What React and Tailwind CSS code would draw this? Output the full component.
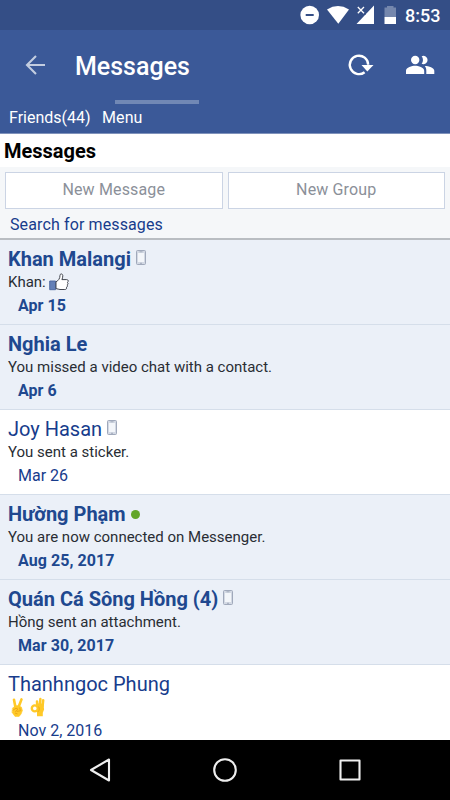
import clsx from "clsx";

const THREADS = [
  { name: "Khan Malangi", preview: "Khan:", date: "Apr 15", unread: true, mobile: true, like: true },
  { name: "Nghia Le", preview: "You missed a video chat with a contact.", date: "Apr 6", unread: true },
  { name: "Joy Hasan", preview: "You sent a sticker.", date: "Mar 26", mobile: true },
  { name: "Hường Phạm", preview: "You are now connected on Messenger.", date: "Aug 25, 2017", unread: true, online: true },
  { name: "Quán Cá Sông Hồng (4)", preview: "Hồng sent an attachment.", date: "Mar 30, 2017", unread: true, mobile: true },
  { name: "Thanhngoc Phung", date: "Nov 2, 2016", hands: true },
];

function StatusBar() {
  return (
    <div className="flex h-[30px] items-center bg-[#344e86] pl-[300px] text-white">
      <svg width="100" height="30" viewBox="0 0 100 30" fill="currentColor" className="shrink-0">
        <circle cx="9.7" cy="15" r="9.3" />
        <path d="M5.7 15h8" stroke="#344e86" strokeWidth="2" />
        <path d="M27 9.4Q38 2.6 49 9.4L38.3 23.8Z" />
        <path d="M74 5.5V24H56.5Z" />
        <path d="M56 5L66 15V5Z" fill="#344e86" />
        <path d="M57.8 7l6.2 6.2M64 7l-6.2 6.2" stroke="currentColor" strokeWidth="1.3" />
        <path d="M87 6h6.5v1.5H96V17H84.5V7.5H87Z" opacity=".32" />
        <path d="M84.5 17H96v7H84.5z" />
      </svg>
      <span className="ml-[5px] pt-px text-[18px] leading-[30px] font-medium">8:53</span>
    </div>
  );
}

function Header() {
  return (
    <header className="h-[104px] border-b border-[#7f92bb] bg-[#3b5998] text-white">
      <div className="flex h-[70px] items-center pl-[25px]">
        <svg width="21" height="20" viewBox="0 0 21 20" fill="none" stroke="#c3cde0" strokeWidth="2.1">
          <path d="M20 10H2M11 1L2 10l9 9" />
        </svg>
        <h1 className="ml-[29px] w-[243px] pt-[3px] text-[25px] leading-[32px] font-medium">Messages</h1>
        <svg width="28" height="24" viewBox="0 0 28 24" className="ml-[29px]">
          <path d="M17.6 19.2A9.2 9.2 0 1 1 21.2 11.8" fill="none" stroke="white" strokeWidth="2.4" />
          <path d="M14.5 12H26.5l-6.2 6.4Z" fill="white" />
        </svg>
        <svg width="30" height="20" viewBox="0 0 30 20" fill="white" className="ml-[30px]">
          <circle cx="10.2" cy="5" r="4.2" />
          <path d="M16.6 1.2a4.2 4.2 0 1 1 0 7.6c1.8-2 1.8-5.6 0-7.6ZM1 19v-3.3C1 12.3 7 10.7 10.1 10.7S19.2 12.3 19.2 15.7V19ZM19.8 11c4 .1 9.5 1.8 9.5 4.7V19h-8v-3.3c0-2-.5-3.5-1.5-4.7Z" />
        </svg>
      </div>
      <div className="ml-[115px] h-1 w-[84px] bg-[#7188b5]" />
      <nav className="flex gap-[11px] pl-[9px] text-[16px] leading-[27px]">
        <span className="w-[82px]">Friends(44)</span>
        <span className="tracking-[.1px]">Menu</span>
      </nav>
    </header>
  );
}

function PhoneIcon() {
  return (
    <svg width="11" height="16" viewBox="0 0 11 16" className="mb-[2px] ml-[5px] shrink-0">
      <rect x=".5" y=".5" width="9" height="14" rx="1" fill="#d3d9e4" stroke="#a0a9bb" />
      <path d="M2 3h6v9H2z" fill="#f3f6fa" />
      <path d="M3.5 1.8h3M4 13.3h2" stroke="#9099ac" strokeWidth=".7" />
    </svg>
  );
}

function LikeIcon() {
  return (
    <svg width="20" height="18" viewBox="0 0 20 18" className="ml-[3px]">
      <path d="M.7 8h5.8v8.7H.7z" fill="#6480b7" stroke="#49659d" strokeWidth=".9" />
      <path d="M7 8.8c2.6-1.3 3.9-3.2 4-6.4 0-2 2.7-2 2.8.3.1 1.4-.5 3-.9 3.9h4.8c1.9 0 2 2.2.7 2.8 1 .8.7 2.1-.3 2.5.7.8.3 2.1-.6 2.4.4 1.4-.3 2.2-1.7 2.2H11c-1.5 0-2.2-.8-4-.9Z" fill="white" stroke="#424650" />
    </svg>
  );
}

function Hands() {
  return (
    <svg width="38" height="20" viewBox="0 0 38 20" strokeLinecap="round" strokeLinejoin="round" className="ml-[3px]">
      <path d="M4.4 10L3 2.8M7.6 10l2.9-7.6" fill="none" stroke="#ffc928" strokeWidth="2.6" />
      <path d="M1.8 10.8l4-2.4 4.6 1.6 1 3.6-1.3 3.4-2 2.4H4L1.2 15.6Z" fill="#ffc928" stroke="#ffc928" strokeWidth=".6" />
      <path d="M2 13.2l3-2 2 1-2.4 2.2M8.8 11l.6 2.8-3.4.6M4.4 16.2l1.8.6" fill="none" stroke="#eba414" strokeWidth=".9" />
      <path d="M26.2 8l-.2-3.6M28.8 8l.6-6M31.6 9l.6-5.8" fill="none" stroke="#ffc928" strokeWidth="2.5" />
      <path d="M25.8 6.5h6.6l.7 5.9-1.3 3.4v3.4h-5.8v-3.4Z" fill="#ffc928" />
      <circle cx="23.8" cy="11.4" r="3" fill="white" stroke="#ffc928" strokeWidth="2.4" />
      <path d="M27.6 9.8c1.2 1.4 1.1 3.6-.6 5" fill="none" stroke="#edab0b" strokeWidth=".8" />
    </svg>
  );
}

function Thread({ thread }) {
  return (
    <li
      className={clsx(
        "h-[85px] border-b border-[#d5deea] pl-2",
        thread.unread ? "bg-[#ebf0f8] text-[#20488f]" : "bg-white text-[#173c8c]"
      )}
    >
      <div className={clsx("flex h-[32px] items-center pt-[6px] text-[20px] leading-[26px]", thread.unread ? "font-bold" : "font-normal")}>
        <span className="whitespace-nowrap">{thread.name}</span>
        {thread.mobile && <PhoneIcon />}
        {thread.online && <span className="ml-[5px] size-[9px] rounded-full bg-[#63a62b]" />}
      </div>
      <div className="flex h-5 items-center text-[15px] text-[#292d34]">
        {thread.preview && <span className="whitespace-nowrap">{thread.preview}</span>}
        {thread.like && <LikeIcon />}
        {thread.hands && <Hands />}
      </div>
      <div className={clsx("pt-[2px] pl-[10px] text-[16px] leading-6", thread.unread ? "font-bold tracking-[.06px]" : "font-normal")}>
        {thread.date}
      </div>
    </li>
  );
}

function NavigationBar() {
  return (
    <div className="flex h-[60px] items-center justify-center bg-black">
      <svg width="274" height="30" viewBox="0 0 274 30" fill="none" stroke="#eee" strokeWidth="2.1" strokeLinejoin="round">
        <path d="M21 4.5v21L3 15Z" />
        <circle cx="137" cy="15" r="10.8" />
        <rect x="252.5" y="5.5" width="19" height="19" />
      </svg>
    </div>
  );
}

export default function App() {
  return (
    <div className="flex h-[800px] w-[450px] flex-col overflow-hidden bg-white font-[Roboto,sans-serif]">
      <StatusBar />
      <Header />
      <main className="h-[606px] overflow-hidden">
        <h2 className="h-[33px] pl-1 text-[20px] leading-[34px] font-bold text-black">Messages</h2>
        <section className="h-[73px] border-b-2 border-[#b9bdc2] bg-[#f5f7f9] px-[5px] pt-[5px]">
          <div className="grid grid-cols-2 gap-[5px]">
            <button className="h-[37px] border border-[#cbd4e4] bg-white pb-[2px] text-[16px] tracking-[.15px] text-[#8b9099]">New Message</button>
            <button className="h-[37px] border border-[#cbd4e4] bg-white pb-[2px] text-[16px] tracking-[.15px] text-[#8b9099]">New Group</button>
          </div>
          <a className="block pl-[5px] text-[16px] leading-[31px] tracking-[.12px] text-[#173c8c]">Search for messages</a>
        </section>
        <ul>
          {THREADS.map((thread) => (
            <Thread key={thread.name} thread={thread} />
          ))}
        </ul>
      </main>
      <NavigationBar />
    </div>
  );
}
